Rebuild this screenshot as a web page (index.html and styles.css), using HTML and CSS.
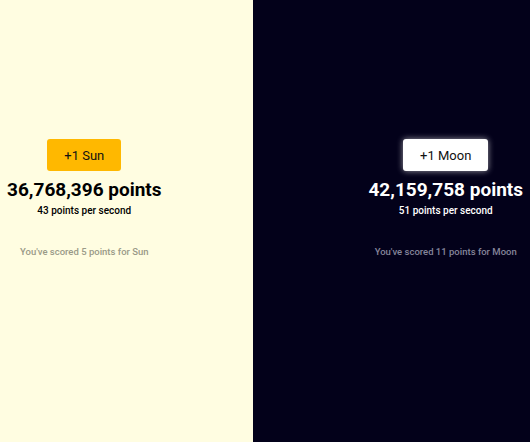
FILE: index.html
```html
<!DOCTYPE html>
<html lang="en">
<head>
    <meta charset="UTF-8">
    <meta name="viewport" content="width=device-width, initial-scale=1.0">
    <title>Sun vs Moon</title>
    <link rel="stylesheet" href="styles.css">
</head>
<body>
    <div class="game">
        <div class="side sun">
            <div class="team">
                <button class="btn" type="button">+1 Sun</button>
                <div class="score">36,768,396 points</div>
                <div class="rate">43 points per second</div>
                <div class="mine">You've scored 5 points for Sun</div>
            </div>
        </div>
        <div class="side moon">
            <div class="team">
                <button class="btn" type="button">+1 Moon</button>
                <div class="score">42,159,758 points</div>
                <div class="rate">51 points per second</div>
                <div class="mine">You've scored 11 points for Moon</div>
            </div>
        </div>
    </div>
</body>
</html>
```

FILE: styles.css
```css
body {
    margin: 0;
    font-family: Roboto, "Liberation Sans", sans-serif;
}

.game {
    display: flex;
    height: 442px;
}

.side {
    display: flex;
    align-items: flex-start;
    padding-top: 139px;
    box-sizing: border-box;
}

.sun {
    width: 253px;
    background-color: #fffde1;
    color: #000;
    padding-left: 7px;
}

.moon {
    flex: 1;
    justify-content: flex-end;
    background-color: #03011a;
    color: #fff;
    padding-right: 7px;
}

.team {
    display: flex;
    flex-direction: column;
    align-items: center;
}

.btn {
    height: 32px;
    padding: 0;
    font-family: inherit;
    font-size: 13px;
    white-space: nowrap;
    border: none;
    border-radius: 3px;
    color: #111;
    cursor: pointer;
}

.sun .btn {
    width: 74px;
    background-color: #ffb800;
}

.moon .btn {
    width: 85px;
    background-color: #fff;
    box-shadow: 0 0 6px rgba(255, 255, 255, 0.6);
}

.score {
    margin-top: 8px;
    font-size: 19px;
    font-weight: 700;
    line-height: 22px;
}

.rate {
    margin-top: 3px;
    font-size: 10px;
    font-weight: 500;
    line-height: 14px;
}

.mine {
    margin-top: 28px;
    font-size: 9.5px;
    font-weight: 500;
    color: #9a9a88;
}

.moon .mine {
    color: #85859a;
}
```
